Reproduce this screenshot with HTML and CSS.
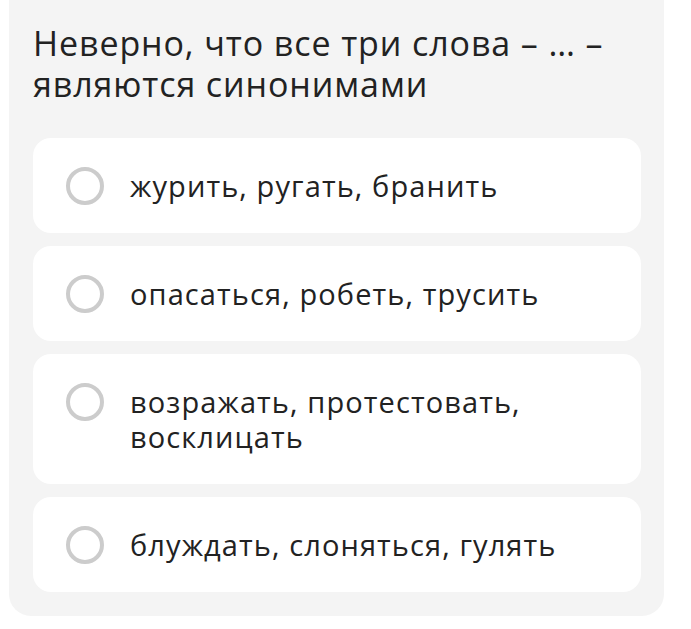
FILE: index.html
```html
<!DOCTYPE html>
<html lang="ru">
<head>
    <meta charset="UTF-8">
    <meta name="viewport" content="width=device-width, initial-scale=1.0">
    <title>Вопрос</title>
    <link rel="stylesheet" href="styles.css">
</head>
<body>
    <div class="question-card">
        <h2 class="question-title">Неверно, что все три слова – … – являются синонимами</h2>
        <div class="answers">
            <label class="answer">
                <span class="radio"></span>
                <span class="answer-text">журить, ругать, бранить</span>
            </label>
            <label class="answer">
                <span class="radio"></span>
                <span class="answer-text">опасаться, робеть, трусить</span>
            </label>
            <label class="answer">
                <span class="radio"></span>
                <span class="answer-text">возражать, протестовать, восклицать</span>
            </label>
            <label class="answer">
                <span class="radio"></span>
                <span class="answer-text">блуждать, слоняться, гулять</span>
            </label>
        </div>
    </div>
</body>
</html>
```

FILE: styles.css
```css
body {
    margin: 0;
    background: #ffffff;
    font-family: "Open Sans", "Noto Sans", sans-serif;
    color: #222222;
}
.question-card {
    width: 608px;
    margin: -30px 0 0 9px;
    padding: 53px 23px 24px 24px;
    background: #f4f4f4;
    border-radius: 22px;
}
.question-title {
    margin: 0 0 33px 0;
    font-size: 34px;
    line-height: 41px;
    font-weight: 400;
    letter-spacing: 0.9px;
    padding-right: 20px;
}
.answers {
    display: flex;
    flex-direction: column;
    gap: 13px;
}
.answer {
    display: flex;
    align-items: flex-start;
    padding: 30px 20px 30px 33px;
    background: #ffffff;
    border-radius: 18px;
    cursor: pointer;
}
.radio {
    flex: none;
    width: 30px;
    height: 30px;
    margin: -1px 26px -3px 0;
    border: 4px solid #cccccc;
    border-radius: 50%;
}
.answer-text {
    font-size: 29px;
    line-height: 35px;
    font-weight: 400;
    letter-spacing: 1.1px;
    padding-right: 10px;
}
```
